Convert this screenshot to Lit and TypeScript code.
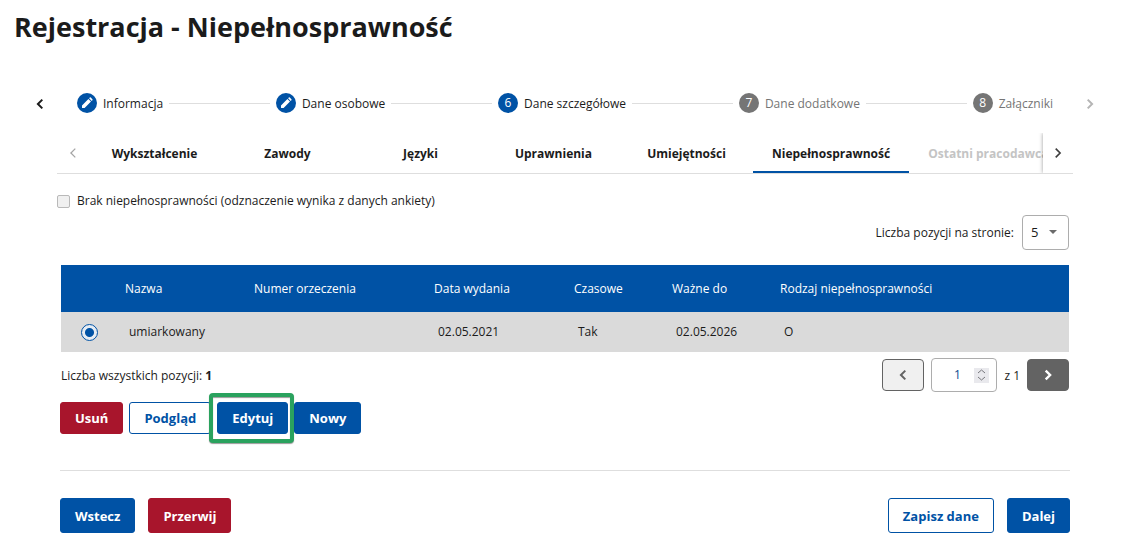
import { LitElement, html, css, svg } from "lit";
import { customElement, property, state } from "lit/decorators.js";
import { classMap } from "lit/directives/class-map.js";

type StepState = "done" | "current" | "todo";

interface Step {
  label: string;
  mark: string;
  state: StepState;
}

interface Certificate {
  id: string;
  name: string;
  number: string;
  issued: string;
  temporary: string;
  validTo: string;
  kind: string;
}

const STEPS: Step[] = [
  { label: "Informacja", mark: "", state: "done" },
  { label: "Dane osobowe", mark: "", state: "done" },
  { label: "Dane szczegółowe", mark: "6", state: "current" },
  { label: "Dane dodatkowe", mark: "7", state: "todo" },
  { label: "Załączniki", mark: "8", state: "todo" },
];

const TABS = [
  "Wykształcenie",
  "Zawody",
  "Języki",
  "Uprawnienia",
  "Umiejętności",
  "Niepełnosprawność",
  "Ostatni pracodawca",
];

const ROWS: Certificate[] = [
  {
    id: "1",
    name: "umiarkowany",
    number: "",
    issued: "02.05.2021",
    temporary: "Tak",
    validTo: "02.05.2026",
    kind: "O",
  },
];

const pencil = svg`<path d="M3 10.400V13h2.600L12 6.600 9.400 4zM10.100 3.300l2.600 2.600.7-.7a.7.7 0 0 0 0-1l-1.600-1.600a.7.7 0 0 0-1 0z"/>`;

const chevron = (direction: "left" | "right", size: number, weight: number) => html`
  <svg width=${size} height=${size} viewBox="0 0 12 12" fill="none" stroke="currentColor"
    stroke-width=${weight} aria-hidden="true">
    <path d=${direction === "left" ? "M8.3 1.6 3.9 6l4.4 4.4" : "M3.7 1.6 8.1 6l-4.4 4.4"} />
  </svg>
`;

const base = css`
  * {
    box-sizing: border-box;
  }
  button,
  input,
  select {
    font: inherit;
    color: inherit;
    margin: 0;
  }
  svg {
    display: block;
  }
`;

@customElement("form-stepper")
export class FormStepper extends LitElement {
  static styles = [
    base,
    css`
      :host {
        display: flex;
        align-items: center;
        height: 20px;
      }
      .arrow {
        flex: none;
        width: 12px;
        padding: 2px 0 0;
        border: 0;
        background: none;
        color: #1b1b1b;
      }
      .arrow:disabled {
        color: #b5b5b5;
      }
      .steps {
        flex: 1;
        display: flex;
        align-items: center;
        gap: 6px;
        margin: 0 31px;
        padding: 0;
        list-style: none;
      }
      .step {
        display: flex;
        align-items: center;
        gap: 6px;
        white-space: nowrap;
      }
      .step:not(:last-child) {
        flex: 1 0 auto;
      }
      .step:not(:last-child)::after {
        content: "";
        flex: 1;
        height: 1px;
        background: #dedede;
      }
      .mark {
        display: grid;
        place-items: center;
        width: 20px;
        height: 20px;
        border-radius: 50%;
        background: #0052a5;
        color: #fff;
        fill: #fff;
      }
      .label {
        padding-top: 2px;
      }
      .todo .mark {
        background: #757575;
      }
      .todo .label {
        color: #757575;
      }
    `,
  ];

  render() {
    return html`
      <button class="arrow" aria-label="Poprzednie kroki">${chevron("left", 12, 2)}</button>
      <ol class="steps">
        ${STEPS.map(
          (step) => html`
            <li class="step ${step.state}">
              <span class="mark">
                ${step.state === "done"
                  ? html`<svg width="16" height="16" viewBox="0 0 16 16" aria-hidden="true">${pencil}</svg>`
                  : step.mark}
              </span>
              <span class="label">${step.label}</span>
            </li>
          `,
        )}
      </ol>
      <button class="arrow" disabled aria-label="Następne kroki">${chevron("right", 12, 2)}</button>
    `;
  }
}

@customElement("form-tabs")
export class FormTabs extends LitElement {
  @property() active = "Niepełnosprawność";

  static styles = [
    base,
    css`
      :host {
        display: flex;
        height: 41px;
        border-bottom: 1px solid #dedede;
      }
      .pager {
        flex: none;
        display: grid;
        place-items: center;
        width: 31px;
        padding: 0;
        border: 0;
        background: #fff;
        color: #3c3c3c;
      }
      .pager:disabled {
        color: #a5a5a5;
      }
      .pager.raised {
        width: 30px;
        z-index: 1;
        box-shadow: 0 0 4px rgba(0, 0, 0, 0.4);
        clip-path: inset(0 0 0 -6px);
      }
      .list {
        flex: 1;
        min-width: 0;
        display: flex;
        overflow: hidden;
      }
      .tab {
        flex: none;
        min-width: 133px;
        padding: 4px 19px 0;
        border: 0;
        border-bottom: 2px solid transparent;
        background: none;
        font-weight: 700;
        white-space: nowrap;
      }
      .tab.active {
        border-bottom-color: #0052a5;
      }
      .tab:disabled {
        color: #c4c4c4;
      }
    `,
  ];

  render() {
    return html`
      <button class="pager" disabled aria-label="Przewiń w lewo">${chevron("left", 12, 1.3)}</button>
      <div class="list" role="tablist">
        ${TABS.map(
          (tab) => html`
            <button
              class=${classMap({ tab: true, active: tab === this.active })}
              role="tab"
              aria-selected=${tab === this.active}
              ?disabled=${tab === "Ostatni pracodawca"}
              @click=${() => (this.active = tab)}
            >${tab}</button>
          `,
        )}
      </div>
      <button class="pager raised" aria-label="Przewiń w prawo">${chevron("right", 12, 1.6)}</button>
    `;
  }
}

@customElement("certificate-table")
export class CertificateTable extends LitElement {
  @state() private page = 1;

  static styles = [
    base,
    css`
      :host {
        display: block;
      }
      .size {
        display: flex;
        justify-content: flex-end;
        align-items: center;
        gap: 8px;
        margin-bottom: 15px;
      }
      .select {
        display: grid;
        align-items: center;
      }
      .select > * {
        grid-area: 1 / 1;
      }
      .select select {
        width: 47px;
        height: 35px;
        padding: 0 8px 2px;
        border: 1px solid #adadad;
        border-radius: 4px;
        background: #fff;
        appearance: none;
        font-size: 13px;
      }
      .select svg {
        justify-self: end;
        margin: 0 12px 2px 0;
        fill: #6b6b6b;
        pointer-events: none;
      }
      table {
        width: 100%;
        table-layout: fixed;
        border-collapse: collapse;
        text-align: left;
      }
      th {
        height: 47px;
        padding: 0;
        background: #0052a5;
        color: #fff;
        font-weight: 400;
      }
      td {
        height: 40px;
        padding: 0 4px;
        background: #dadada;
      }
      .c-pick {
        width: 64px;
      }
      .c-name {
        width: 129px;
      }
      .c-number {
        width: 180px;
      }
      .c-issued {
        width: 140px;
      }
      .c-temp {
        width: 98px;
      }
      .c-valid {
        width: 108px;
      }
      .radio {
        display: block;
        width: 17px;
        height: 17px;
        margin-left: 16px;
        border: 1px solid #0052a5;
        border-radius: 50%;
        background: radial-gradient(circle, #0052a5 4px, #e6ecf3 5px);
        appearance: none;
      }
      .foot {
        display: flex;
        align-items: center;
        justify-content: space-between;
        padding-top: 6px;
      }
      .text {
        padding-top: 2px;
      }
      .pages {
        display: flex;
        align-items: center;
        gap: 7px;
      }
      .turn {
        display: grid;
        place-items: center;
        width: 42px;
        height: 32px;
        padding: 0;
        border: 1px solid #636363;
        border-radius: 4px;
        background: #636363;
        color: #fff;
      }
      .turn:disabled {
        background: #f0f0f0;
        color: #636363;
      }
      .number {
        display: flex;
        align-items: center;
        width: 66px;
        height: 34px;
        padding-right: 7px;
        border: 1px solid #adadad;
        border-radius: 4px;
      }
      .number input {
        flex: 1;
        min-width: 0;
        padding: 0 0 0 8px;
        border: 0;
        outline: 0;
        background: none;
        color: #0b4a8f;
        text-align: center;
        appearance: textfield;
      }
      .number input::-webkit-inner-spin-button {
        appearance: none;
      }
      .spin {
        display: grid;
        width: 15px;
        height: 15px;
        background: #e9e9ed;
        color: #77777c;
      }
      .spin button {
        display: grid;
        place-items: center;
        padding: 0;
        border: 0;
        background: none;
      }
    `,
  ];

  render() {
    return html`
      <div class="size">
        <label for="size">Liczba pozycji na stronie:</label>
        <span class="select">
          <select id="size">
            <option>5</option>
            <option>10</option>
            <option>20</option>
          </select>
          <svg width="8" height="4" viewBox="0 0 8 4" aria-hidden="true"><path d="M0 0h8L4 4z" /></svg>
        </span>
      </div>
      <table>
        <thead>
          <tr>
            <th class="c-pick"></th>
            <th class="c-name">Nazwa</th>
            <th class="c-number">Numer orzeczenia</th>
            <th class="c-issued">Data wydania</th>
            <th class="c-temp">Czasowe</th>
            <th class="c-valid">Ważne do</th>
            <th>Rodzaj niepełnosprawności</th>
          </tr>
        </thead>
        <tbody>
          ${ROWS.map(
            (row) => html`
              <tr>
                <td><input class="radio" type="radio" name="row" checked aria-label=${row.name} /></td>
                <td>${row.name}</td>
                <td>${row.number}</td>
                <td>${row.issued}</td>
                <td>${row.temporary}</td>
                <td>${row.validTo}</td>
                <td>${row.kind}</td>
              </tr>
            `,
          )}
        </tbody>
      </table>
      <div class="foot">
        <span class="text">Liczba wszystkich pozycji: <strong>${ROWS.length}</strong></span>
        <div class="pages">
          <button class="turn" disabled aria-label="Poprzednia strona">${chevron("left", 12, 2)}</button>
          <span class="number">
            <input type="number" min="1" max="1" .value=${String(this.page)} aria-label="Numer strony" />
            <span class="spin">
              <button tabindex="-1" aria-label="Więcej">
                <svg width="9" height="5" viewBox="0 0 9 5" fill="none" stroke="currentColor"><path d="M1 4 4.5 1 8 4" /></svg>
              </button>
              <button tabindex="-1" aria-label="Mniej">
                <svg width="9" height="5" viewBox="0 0 9 5" fill="none" stroke="currentColor"><path d="M1 1 4.5 4 8 1" /></svg>
              </button>
            </span>
          </span>
          <span class="text">z 1</span>
          <button class="turn" aria-label="Następna strona">${chevron("right", 12, 2.4)}</button>
        </div>
      </div>
    `;
  }
}

@customElement("app-root")
export class AppRoot extends LitElement {
  static styles = [
    base,
    css`
      :host {
        display: block;
        background: #fff;
        color: #1b1b1b;
        font: 12px/18px "Open Sans", "Noto Sans", sans-serif;
      }
      h1 {
        margin: 0;
        padding: 7px 14px 0;
        font-size: 27px;
        line-height: 40px;
        font-weight: 700;
      }
      form-stepper {
        margin: 46px 30px 0 34px;
      }
      form-tabs {
        margin: 20px 53px 0 57px;
      }
      .none {
        display: flex;
        align-items: center;
        gap: 7px;
        width: fit-content;
        margin: 18px 57px 5px;
      }
      .none input {
        width: 13px;
        height: 13px;
        border: 1px solid #b9b9b9;
        border-radius: 2px;
        background: #f0f0f0;
        appearance: none;
      }
      certificate-table {
        margin: 0 57px 0 61px;
      }
      .actions,
      .nav {
        display: flex;
        margin: 0 56px 0 60px;
      }
      .actions {
        gap: 6px;
        padding: 10px 0 36px;
        border-bottom: 1px solid #dedede;
      }
      .nav {
        gap: 13px;
        padding: 27px 0 24px;
      }
      .push {
        margin-left: auto;
      }
      .btn {
        height: 32px;
        padding: 0 14px;
        border: 1px solid #0052a5;
        border-radius: 3px;
        background: #0052a5;
        color: #fff;
        font-size: 13px;
        font-weight: 700;
      }
      .nav .btn {
        height: 35px;
      }
      .btn.danger {
        border-color: #a8152c;
        background: #a8152c;
      }
      .btn.outline {
        background: #fff;
        color: #0052a5;
      }
      .marked {
        position: relative;
        display: flex;
      }
      .marked::before {
        content: "";
        position: absolute;
        inset: -9px -6px -9px -8px;
        border: 4px solid #2aa25e;
        border-radius: 4px;
        background: #fff;
        box-shadow: 0 1px 1px rgba(0, 0, 0, 0.4), inset 0 1px 1px rgba(0, 0, 0, 0.4);
      }
      .marked .btn {
        position: relative;
      }
    `,
  ];

  render() {
    return html`
      <h1>Rejestracja - Niepełnosprawność</h1>
      <form-stepper></form-stepper>
      <form-tabs></form-tabs>
      <label class="none">
        <input type="checkbox" disabled />
        Brak niepełnosprawności (odznaczenie wynika z danych ankiety)
      </label>
      <certificate-table></certificate-table>
      <div class="actions">
        <button class="btn danger">Usuń</button>
        <button class="btn outline">Podgląd</button>
        <span class="marked"><button class="btn">Edytuj</button></span>
        <button class="btn">Nowy</button>
      </div>
      <div class="nav">
        <button class="btn">Wstecz</button>
        <button class="btn danger">Przerwij</button>
        <button class="btn outline push">Zapisz dane</button>
        <button class="btn">Dalej</button>
      </div>
    `;
  }
}
